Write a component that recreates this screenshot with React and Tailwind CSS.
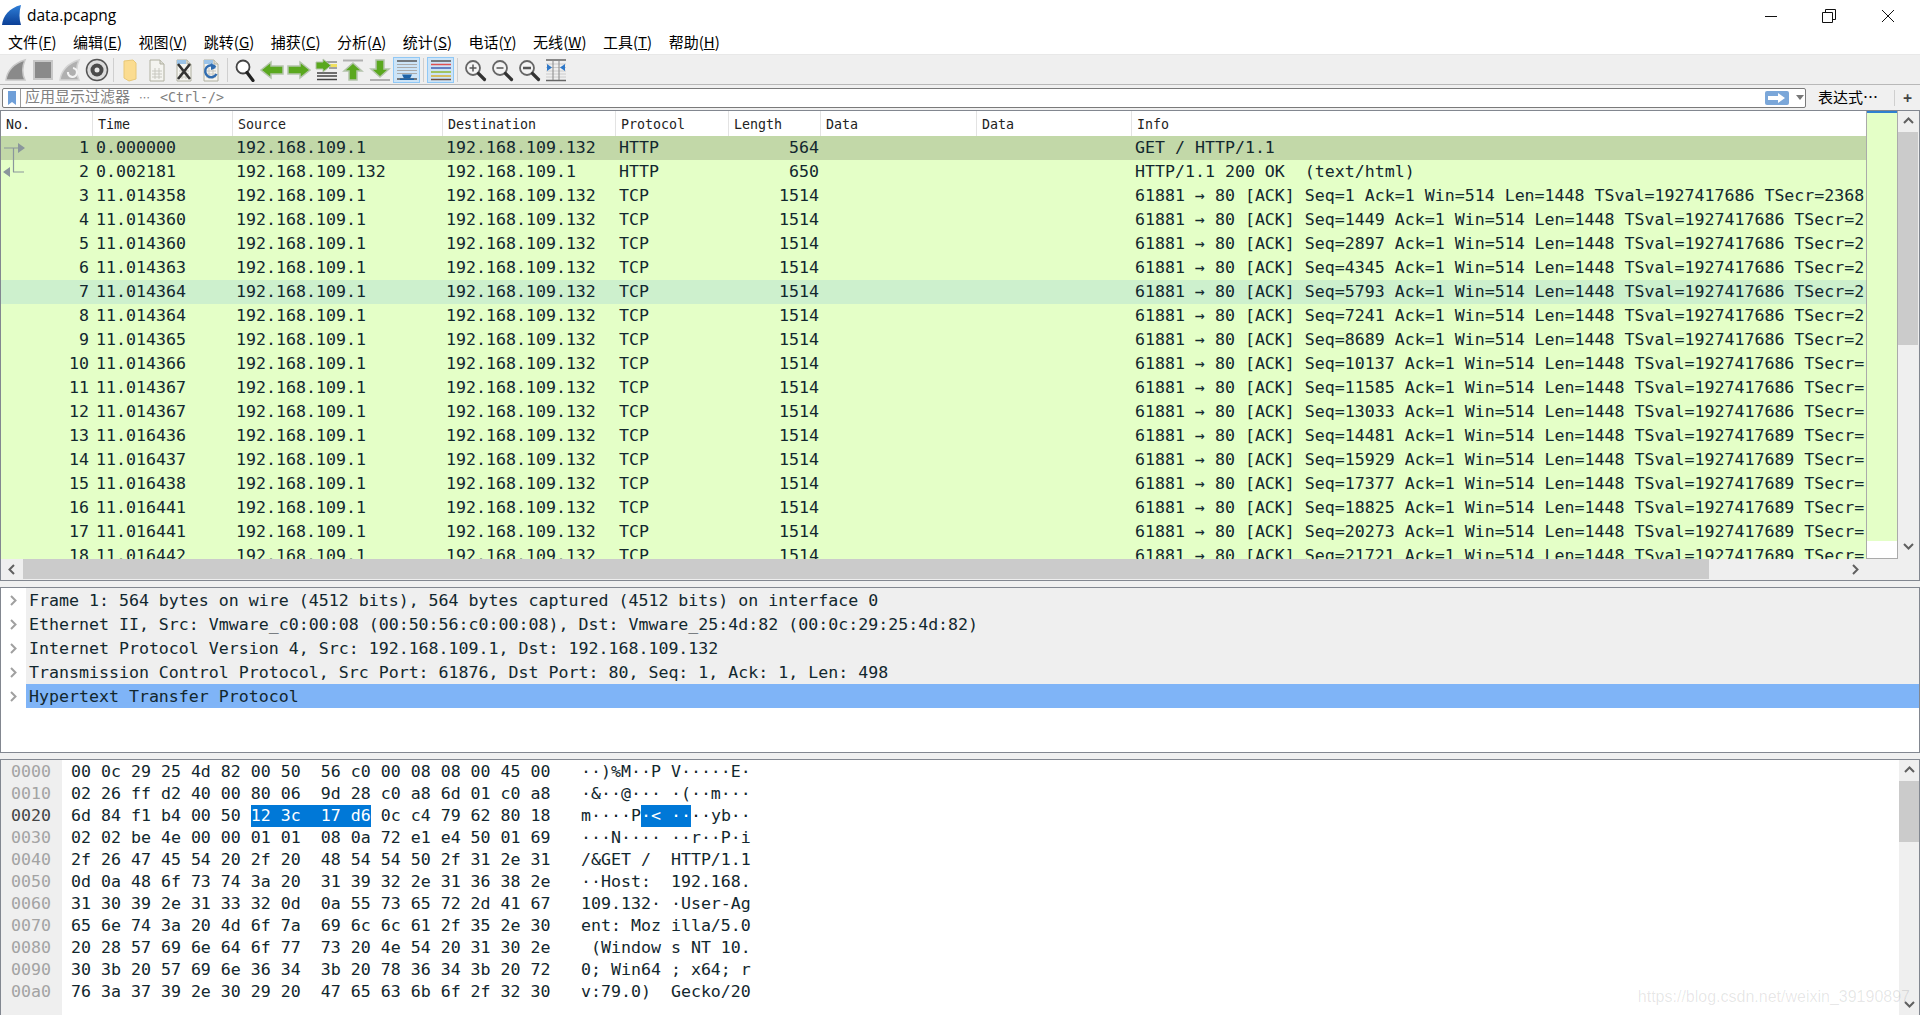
import React from "react";

const mono = "font-['DejaVu_Sans_Mono','Noto_Sans_CJK_SC',monospace]";

const menus = [
  ["文件", "F"], ["编辑", "E"], ["视图", "V"], ["跳转", "G"], ["捕获", "C"], ["分析", "A"],
  ["统计", "S"], ["电话", "Y"], ["无线", "W"], ["工具", "T"], ["帮助", "H"],
];

const columns = [
  { name: "No.", width: "w-[92px]" },
  { name: "Time", width: "w-[140px]" },
  { name: "Source", width: "w-[210px]" },
  { name: "Destination", width: "w-[173px]" },
  { name: "Protocol", width: "w-[113px]" },
  { name: "Length", width: "w-[92px]" },
  { name: "Data", width: "w-[156px]" },
  { name: "Data", width: "w-[155px]" },
  { name: "Info", width: "flex-1" },
];

const HOST = "192.168.109.1";
const VM = "192.168.109.132";
const ack = (seq, ts, tail) => `61881 → 80 [ACK] Seq=${seq} Ack=1 Win=514 Len=1448 TSval=${ts} TSecr=${tail}`;

const packets = [
  [1, "0.000000", HOST, VM, "HTTP", 564, "GET / HTTP/1.1"],
  [2, "0.002181", VM, HOST, "HTTP", 650, "HTTP/1.1 200 OK  (text/html)"],
  [3, "11.014358", HOST, VM, "TCP", 1514, ack(1, 1927417686, "2368")],
  [4, "11.014360", HOST, VM, "TCP", 1514, ack(1449, 1927417686, "2")],
  [5, "11.014360", HOST, VM, "TCP", 1514, ack(2897, 1927417686, "2")],
  [6, "11.014363", HOST, VM, "TCP", 1514, ack(4345, 1927417686, "2")],
  [7, "11.014364", HOST, VM, "TCP", 1514, ack(5793, 1927417686, "2")],
  [8, "11.014364", HOST, VM, "TCP", 1514, ack(7241, 1927417686, "2")],
  [9, "11.014365", HOST, VM, "TCP", 1514, ack(8689, 1927417686, "2")],
  [10, "11.014366", HOST, VM, "TCP", 1514, ack(10137, 1927417686, "")],
  [11, "11.014367", HOST, VM, "TCP", 1514, ack(11585, 1927417686, "")],
  [12, "11.014367", HOST, VM, "TCP", 1514, ack(13033, 1927417686, "")],
  [13, "11.016436", HOST, VM, "TCP", 1514, ack(14481, 1927417689, "")],
  [14, "11.016437", HOST, VM, "TCP", 1514, ack(15929, 1927417689, "")],
  [15, "11.016438", HOST, VM, "TCP", 1514, ack(17377, 1927417689, "")],
  [16, "11.016441", HOST, VM, "TCP", 1514, ack(18825, 1927417689, "")],
  [17, "11.016441", HOST, VM, "TCP", 1514, ack(20273, 1927417689, "")],
  [18, "11.016442", HOST, VM, "TCP", 1514, ack(21721, 1927417689, "")],
];

const details = [
  "Frame 1: 564 bytes on wire (4512 bits), 564 bytes captured (4512 bits) on interface 0",
  "Ethernet II, Src: Vmware_c0:00:08 (00:50:56:c0:00:08), Dst: Vmware_25:4d:82 (00:0c:29:25:4d:82)",
  "Internet Protocol Version 4, Src: 192.168.109.1, Dst: 192.168.109.132",
  "Transmission Control Protocol, Src Port: 61876, Dst Port: 80, Seq: 1, Ack: 1, Len: 498",
  "Hypertext Transfer Protocol",
];

const hexRows = [
  ["0000", "00 0c 29 25 4d 82 00 50  56 c0 00 08 08 00 45 00", "··)%M··P V·····E·"],
  ["0010", "02 26 ff d2 40 00 80 06  9d 28 c0 a8 6d 01 c0 a8", "·&··@··· ·(··m···"],
  ["0020", "6d 84 f1 b4 00 50 12 3c  17 d6 0c c4 79 62 80 18", "m····P·< ····yb··"],
  ["0030", "02 02 be 4e 00 00 01 01  08 0a 72 e1 e4 50 01 69", "···N···· ··r··P·i"],
  ["0040", "2f 26 47 45 54 20 2f 20  48 54 54 50 2f 31 2e 31", "/&GET /  HTTP/1.1"],
  ["0050", "0d 0a 48 6f 73 74 3a 20  31 39 32 2e 31 36 38 2e", "··Host:  192.168."],
  ["0060", "31 30 39 2e 31 33 32 0d  0a 55 73 65 72 2d 41 67", "109.132· ·User-Ag"],
  ["0070", "65 6e 74 3a 20 4d 6f 7a  69 6c 6c 61 2f 35 2e 30", "ent: Moz illa/5.0"],
  ["0080", "20 28 57 69 6e 64 6f 77  73 20 4e 54 20 31 30 2e", " (Window s NT 10."],
  ["0090", "30 3b 20 57 69 6e 36 34  3b 20 78 36 34 3b 20 72", "0; Win64 ; x64; r"],
  ["00a0", "76 3a 37 39 2e 30 29 20  47 65 63 6b 6f 2f 32 30", "v:79.0)  Gecko/20"],
];

function Chevron({ dir, className = "" }) {
  const points = { up: "2,8 6.5,3.5 11,8", down: "2,4 6.5,8.5 11,4", left: "8,2 3.5,6.5 8,11", right: "4,2 8.5,6.5 4,11" }[dir];
  return (
    <svg width="13" height="13" viewBox="0 0 13 13" className={className}>
      <polyline points={points} fill="none" stroke="currentColor" strokeWidth="2" />
    </svg>
  );
}

const Fin = ({ fill, stroke = "none" }) => <path d="M2 22C3 13 10 5 21 2c-3 7-3 14 0 20z" fill={fill} stroke={stroke} strokeWidth="1.5" />;

const Sheet = ({ children }) => (
  <>
    <path d="M5 2h10l4 4v17H5z" fill="#f4f4f0" stroke="#b0b0a0" />
    <path d="M15 2v4h4" fill="#dcdcd4" stroke="#b0b0a0" />
    <path d="M7 13h10M7 16h10M7 19h10M10 10v11M14 10v11" stroke="#c8c8c0" />
    {children}
  </>
);

const Magnifier = ({ children }) => (
  <>
    <circle cx="10" cy="10" r="7" fill="#f4f4f4" stroke="#666" strokeWidth="1.8" />
    <path d="M15.5 15.5l6 6" stroke="#333" strokeWidth="3.2" strokeLinecap="round" />
    {children}
  </>
);

const arrow = "#5aa81e";
const arrowEdge = "#b4c4ac";

const icons = {
  start: <Fin fill="#8a8a8a" stroke="#c8c8c8" />,
  stop: <rect x="3" y="3" width="18" height="18" fill="#8a8a8a" stroke="#c8c8c8" strokeWidth="2" />,
  restart: (
    <>
      <Fin fill="#b0b0b0" stroke="#d4d4d4" />
      <path d="M15 10a4.5 4.5 0 1 1-5 4" fill="none" stroke="#f4f4f4" strokeWidth="2.2" />
    </>
  ),
  options: (
    <>
      <circle cx="12" cy="12" r="10.5" fill="#dcdcdc" stroke="#555" strokeWidth="1.5" />
      <circle cx="12" cy="12" r="6.5" fill="#4a4a4a" />
      <circle cx="12" cy="12" r="2.5" fill="#e8e8e8" />
    </>
  ),
  open: <path d="M6 3l9-1 3 3v16l-7 2-5-3z" fill="#fbdc90" stroke="#e8c878" />,
  save: <Sheet />,
  close: (
    <Sheet>
      <path d="M5 2h9v4H5z" fill="#9cc4e8" />
      <path d="M6 6l12 15M18 6L6 21" stroke="#333" strokeWidth="2.6" />
    </Sheet>
  ),
  reload: (
    <Sheet>
      <path d="M5 2h9v4H5z" fill="#9cc4e8" />
      <path d="M16.5 9a6 6 0 1 0 1 7" fill="none" stroke="#2f6cb0" strokeWidth="2.4" />
      <path d="M12 5l5 5-5 2z" fill="#2f6cb0" />
    </Sheet>
  ),
  find: (
    <>
      <circle cx="10" cy="9" r="6.5" fill="#fff" stroke="#444" strokeWidth="1.8" />
      <path d="M14 14.5l6 8" stroke="#222" strokeWidth="3.2" strokeLinecap="round" />
    </>
  ),
  back: <path d="M1 12l10-8v4h12v8H11v4z" fill={arrow} stroke={arrowEdge} strokeWidth="1.5" />,
  forward: <path d="M23 12L13 4v4H1v8h12v4z" fill={arrow} stroke={arrowEdge} strokeWidth="1.5" />,
  goTo: (
    <>
      <path d="M12 4h11M15 10h8" stroke="#555" />
      <path d="M16 6h7v3h-7z" fill="#f0e060" />
      <path d="M3 15h20M3 18h20M3 21.5h20" stroke="#444" strokeWidth="1.4" />
      <path d="M17 7.5L9 1v3H2v7h7v3z" fill={arrow} stroke={arrowEdge} />
    </>
  ),
  top: (
    <>
      <path d="M2 2.5h20" stroke="#b0b0b0" strokeWidth="2" />
      <path d="M12 5l9 8h-5v9H8v-9H3z" fill={arrow} stroke={arrowEdge} strokeWidth="1.5" />
    </>
  ),
  bottom: (
    <>
      <path d="M2 22h20" stroke="#b0b0b0" strokeWidth="2" />
      <path d="M12 19l9-8h-5V2H8v9H3z" fill={arrow} stroke={arrowEdge} strokeWidth="1.5" />
    </>
  ),
  autoscroll: (
    <>
      <path d="M2 3h20" stroke="#555" strokeWidth="1.5" />
      <path d="M2 6.5h20M2 9.5h20M2 12.5h20M2 15.5h20" stroke="#aaa" />
      <path d="M2 21h20" stroke="#555" strokeWidth="1.5" />
      <path d="M7 16.5h10l-2 4H9z" fill="#1d63a8" />
      <path d="M5 20.5h14V22H5z" fill="#1d63a8" />
    </>
  ),
  colorize: (
    <>
      <path d="M2 3h20" stroke="#555" strokeWidth="1.5" />
      <path d="M2 6.5h20" stroke="#e05050" strokeWidth="1.5" />
      <path d="M2 10h20" stroke="#4060b0" strokeWidth="1.5" />
      <path d="M2 14h20" stroke="#90b830" strokeWidth="1.5" />
      <path d="M2 18h20" stroke="#d8b030" strokeWidth="1.5" />
      <path d="M2 21.5h20" stroke="#705040" strokeWidth="1.5" />
    </>
  ),
  zoomIn: (
    <Magnifier>
      <path d="M6.5 10h7M10 6.5v7" stroke="#555" strokeWidth="1.5" />
    </Magnifier>
  ),
  zoomOut: (
    <Magnifier>
      <path d="M6.5 10h7" stroke="#555" strokeWidth="1.5" />
    </Magnifier>
  ),
  zoomReset: (
    <Magnifier>
      <path d="M6 10h8" stroke="#555" strokeWidth="2.5" />
    </Magnifier>
  ),
  resize: (
    <>
      <path d="M2 2h20M2 22.5h20" stroke="#666" strokeWidth="1.5" />
      <path d="M2 6h20M2 9.5h20M2 13h20M2 16h20M2 19h20" stroke="#ccc" />
      <path d="M9 2v20M15 2v20" stroke="#888" />
      <path d="M3 6l5 3.5L3 13zM21 6l-5 3.5 5 3.5z" fill="#2f78c8" />
    </>
  ),
};

const toolbar = [
  ["start", "stop", "restart", "options"],
  ["open", "save", "close", "reload"],
  ["find", "back", "forward", "goTo", "top", "bottom", "autoscroll"],
  ["colorize"],
  ["zoomIn", "zoomOut", "zoomReset", "resize"],
];

function ToolButton({ name }) {
  const active = name === "autoscroll" || name === "colorize";
  return (
    <div className={`flex h-[26px] w-[27px] items-center justify-center border ${active ? "border-[#90c8f6] bg-[#cde4f7]" : "border-transparent"}`}>
      <svg width="24" height="24" viewBox="0 0 24 24">{icons[name]}</svg>
    </div>
  );
}

function TitleBar() {
  return (
    <div className="flex h-[31px] items-center bg-white">
      <svg width="20" height="21" viewBox="0 0 20 21" className="ml-[2px]">
        <defs>
          <linearGradient id="logoFin" x1="0" y1="0" x2="0" y2="1">
            <stop offset="0" stopColor="#2f7fd8" />
            <stop offset="1" stopColor="#0b3f96" />
          </linearGradient>
        </defs>
        <path d="M0 20C1 11 7 3 19 0c-2 7-2 14 0 20z" fill="url(#logoFin)" />
      </svg>
      <span className="ml-[5px] font-['Open_Sans',sans-serif] text-[15.5px] text-black">data.pcapng</span>
      <div className="ml-auto flex items-center text-[#111]">
        <svg width="14" height="14" viewBox="0 0 14 14" className="mr-[44px]"><path d="M1 7.5h12" stroke="currentColor" /></svg>
        <svg width="14" height="14" viewBox="0 0 14 14" className="mr-[45px]"><path d="M.5 3.5h10v10H.5zM3.5 3.5V.5h10v10h-3" fill="none" stroke="currentColor" /></svg>
        <svg width="14" height="14" viewBox="0 0 14 14" className="mr-[25px]"><path d="M1 1l12 12M13 1L1 13" stroke="currentColor" /></svg>
      </div>
    </div>
  );
}

function FilterBar() {
  return (
    <div className="flex h-[25px] items-center bg-[#f0f0f0] pl-[2px]">
      <div className="flex h-[20px] flex-1 items-center rounded-[2px] border border-[#7a7a7a] bg-white">
        <div className="flex h-full w-[18px] items-center justify-center border-r border-[#9a9a9a]">
          <svg width="8" height="14" viewBox="0 0 8 14"><path d="M0 0h8v14L4 11l-4 3z" fill="#6f9fd8" /></svg>
        </div>
        <span className={`${mono} ml-[4px] flex items-center text-[13.3px] whitespace-pre text-[#808080]`}>
          <span className="text-[15px]">应用显示过滤器</span>
          <span className="ml-[9px] w-[21px] font-['Noto_Sans_CJK_SC',sans-serif] text-[11px]">⋯</span>
          <span>{"<Ctrl-/>"}</span>
        </span>
        <div className="ml-auto flex h-[14px] w-[24px] items-center justify-center rounded-[2px] bg-[#7ba7d9]">
          <svg width="18" height="10" viewBox="0 0 18 10"><path d="M0 3h10V0l7 5-7 5V7H0z" fill="#fff" /></svg>
        </div>
        <svg width="8" height="5" viewBox="0 0 8 5" className="mr-px ml-[7px]"><path d="M0 0h8L4 5z" fill="#777" /></svg>
      </div>
      <div className="flex w-[114px] items-center">
        <span className="ml-[12px] font-['Noto_Sans_CJK_SC',sans-serif] text-[15px] text-black">表达式⋯</span>
        <div className="ml-[16px] h-[16px] w-px bg-[#cfcfcf]" />
        <span className="ml-[8px] text-[16px] leading-none font-bold text-[#444]">+</span>
      </div>
    </div>
  );
}

function PacketRow({ packet, index }) {
  const [no, time, src, dst, proto, len, info] = packet;
  let bg = "bg-[#e4ffc7]";
  if (index === 0) bg = "bg-[#c2d8a8]";
  if (index === 6) bg = "bg-[#cdf0cd]";
  return (
    <div className={`flex h-[24px] shrink-0 items-center whitespace-pre text-[#12272e] ${bg}`}>
      <div className="w-[92px] pr-[4px] text-right">{no}</div>
      <div className="w-[140px] pl-[3px]">{time}</div>
      <div className="w-[210px] pl-[3px]">{src}</div>
      <div className="w-[173px] pl-[3px]">{dst}</div>
      <div className="w-[113px] pl-[3px]">{proto}</div>
      <div className="w-[92px] pr-[2px] text-right">{len}</div>
      <div className="w-[156px]" />
      <div className="w-[155px]" />
      <div className="flex-1 overflow-hidden pl-[3px]">{info}</div>
    </div>
  );
}

function PacketList() {
  return (
    <div className="flex h-[471px] flex-col border border-[#828790] bg-[#efefef]">
      <div className="flex h-[448px]">
        <div className="flex min-w-0 flex-1 flex-col overflow-hidden bg-white">
          <div className={`${mono} flex h-[25px] shrink-0 items-center text-[13.3px] text-[#222]`}>
            {columns.map((c, i) => (
              <div key={i} className={`${c.width} flex h-full items-center border-r border-[#e3e3e3] pt-[2px] pl-[5px] last:border-r-0`}>
                {c.name}
              </div>
            ))}
          </div>
          <div className={`${mono} relative flex-1 overflow-hidden text-[16.6px]`}>
            {packets.map((p, i) => (
              <PacketRow key={p[0]} packet={p} index={i} />
            ))}
            <svg width="26" height="48" viewBox="0 0 26 48" className="absolute top-0 left-0">
              <path d="M3 12h15M12.5 12v24M12 36h11" fill="none" stroke="#8a969c" strokeWidth="1.2" />
              <path d="M17 7l7 5-7 5zM9 31l-7 5 7 5z" fill="#8a969c" />
            </svg>
          </div>
        </div>
        <div className="flex w-[32px] flex-col border-x border-b border-[#aaaaaa]">
          <div className="h-[2px] bg-[#2f80d0]" />
          <div className="flex-1 bg-[#e4ffc7]" />
          <div className="h-[17px] bg-white" />
        </div>
        <div className="flex w-[21px] flex-col pr-px text-[#606060]">
          <div className="flex h-[21px] items-center justify-center"><Chevron dir="up" /></div>
          <div className="h-[213px] bg-[#cbcbcb]" />
          <div className="mt-auto flex h-[21px] items-center justify-center pb-[4px]"><Chevron dir="down" /></div>
        </div>
      </div>
      <div className="flex h-[21px] text-[#606060]">
        <div className="flex w-[22px] items-center justify-center pb-px"><Chevron dir="left" /></div>
        <div className="h-[20px] w-[1686px] bg-[#cbcbcb]" />
        <div className="ml-[136px] flex w-[20px] items-center justify-center pb-px"><Chevron dir="right" /></div>
      </div>
    </div>
  );
}

function DetailsPane() {
  return (
    <div className={`${mono} mt-[6px] h-[166px] border border-[#828790] bg-white text-[16.6px] text-[#12272e]`}>
      {details.map((d, i) => (
        <div key={i} className="flex h-[24px] items-center whitespace-pre">
          <div className="flex w-[25px] items-center justify-center text-[#a0a0a0]"><Chevron dir="right" /></div>
          <div className={`flex h-full flex-1 items-center pt-[2px] pl-[3px] ${i === 4 ? "bg-[#7fb4f7]" : "bg-[#efefef]"}`}>{d}</div>
        </div>
      ))}
    </div>
  );
}

function HexLine({ row, index }) {
  const [, hex, text] = row;
  if (index !== 2) {
    return (
      <div className="flex h-[22px] items-center whitespace-pre">
        <span className="w-[510px]">{hex}</span>
        <span>{text}</span>
      </div>
    );
  }
  return (
    <div className="flex h-[22px] items-center whitespace-pre">
      <span className="w-[510px]">
        {hex.slice(0, 18)}
        <span className="inline-block bg-[#0078d7] leading-[22px] text-white">{hex.slice(18, 30)}</span>
        {hex.slice(30)}
      </span>
      <span>
        {text.slice(0, 6)}
        <span className="inline-block bg-[#0078d7] leading-[22px] text-white">{text.slice(6, 11)}</span>
        {text.slice(11)}
      </span>
    </div>
  );
}

function BytesPane() {
  return (
    <div className={`${mono} mt-[6px] flex min-h-0 flex-1 border border-b-0 border-[#828790] bg-white text-[16.6px] text-[#12272e]`}>
      <div className="w-[61px] shrink-0 bg-[#efefef] pt-px pl-[10px] text-[#a3a3a3]">
        {hexRows.map((r, i) => (
          <div key={r[0]} className={`flex h-[22px] items-center ${i === 2 ? "text-[#444]" : ""}`}>{r[0]}</div>
        ))}
      </div>
      <div className="flex-1 pt-px pl-[9px]">
        {hexRows.map((r, i) => (
          <HexLine key={r[0]} row={r} index={i} />
        ))}
      </div>
      <div className="flex w-[20px] flex-col bg-[#efefef] text-[#606060]">
        <div className="flex h-[21px] items-center justify-center"><Chevron dir="up" /></div>
        <div className="h-[61px] bg-[#cbcbcb]" />
        <div className="mt-auto flex h-[21px] items-center justify-center"><Chevron dir="down" /></div>
      </div>
    </div>
  );
}

export default function App() {
  return (
    <div className="relative flex h-screen w-full flex-col overflow-hidden bg-[#f0f0f0]">
      <TitleBar />
      <div className="flex h-[24px] items-center border-b border-[#e8e8e8] bg-white pl-[8px] font-['Noto_Sans_CJK_SC',sans-serif] text-[15px] text-black">
        {menus.map(([label, key]) => (
          <span key={key} className="mr-[16.5px]">
            {label}(<u>{key}</u>)
          </span>
        ))}
      </div>
      <div className="flex h-[30px] items-center border-b border-[#b8b8b8] bg-[#efefef] pl-[2px]">
        {toolbar.map((group, i) => (
          <React.Fragment key={i}>
            {i > 0 && (
              <div className={`flex justify-center ${i === 1 ? "w-[6px]" : "w-[7px]"}`}>
                <div className="h-[24px] w-px bg-[#cfcfcf]" />
              </div>
            )}
            {group.map((name) => (
              <ToolButton key={name} name={name} />
            ))}
          </React.Fragment>
        ))}
      </div>
      <FilterBar />
      <PacketList />
      <DetailsPane />
      <BytesPane />
      <div className="absolute right-[10px] bottom-[6px] font-['Liberation_Sans',sans-serif] text-[16px] text-black/10">
        https://blog.csdn.net/weixin_39190897
      </div>
    </div>
  );
}
